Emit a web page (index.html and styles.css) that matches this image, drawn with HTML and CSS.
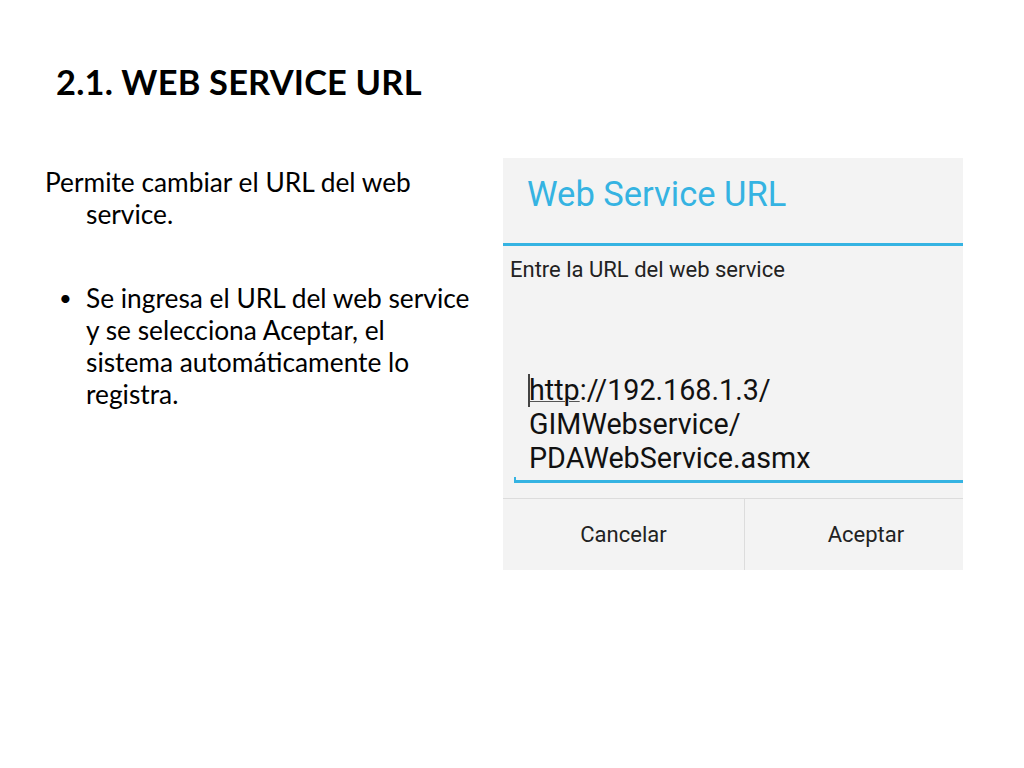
FILE: index.html
```html
<!DOCTYPE html>
<html lang="es">
<head>
<meta charset="utf-8">
<title>2.1. Web Service URL</title>
<link rel="stylesheet" href="styles.css">
</head>
<body>
<div class="slide">
  <h1 class="title">2.1. WEB SERVICE URL</h1>
  <div class="content">
    <div class="text">
      <p class="para">Permite cambiar el URL del web service.</p>
      <ul class="bullets">
        <li>Se ingresa el URL del web service y se selecciona Aceptar, el sistema automáticamente lo registra.</li>
      </ul>
    </div>
    <div class="dialog">
      <div class="dlg-head">Web Service URL</div>
      <div class="dlg-body">
        <div class="dlg-label">Entre la URL del web service</div>
        <div class="dlg-input">
          <div class="url"><span class="cursor"></span><span class="spell">http</span>://192.168.1.3/<br>GIMWebservice/<br>PDAWebService.asmx</div>
          <div class="underline"></div>
        </div>
      </div>
      <div class="dlg-buttons">
        <div class="btn">Cancelar</div>
        <div class="btn">Aceptar</div>
      </div>
    </div>
  </div>
</div>
</body>
</html>
```

FILE: styles.css
```css
html, body {
  margin: 0;
  padding: 0;
  background: #ffffff;
}
.slide {
  width: 1024px;
  height: 768px;
  font-family: "Lato", "Open Sans", sans-serif;
  color: #000;
}
.title {
  margin: 0;
  padding: 62px 0 0 56px;
  font-size: 34.4px;
  font-weight: 700;
  line-height: 40px;
  letter-spacing: 0.2px;
}
.content {
  display: flex;
  align-items: flex-start;
  padding: 56px 0 0 45px;
}
.text {
  width: 425px;
  padding-top: 8px;
  font-size: 26.3px;
  line-height: 32px;
}
.para {
  margin: 0;
  padding-left: 41px;
  text-indent: -41px;
}
.bullets {
  margin: 52px 0 0 0;
  padding: 0 0 0 41px;
  list-style: none;
}
.bullets li {
  position: relative;
}
.bullets li::before {
  content: "•";
  position: absolute;
  left: -27px;
  top: 0;
  font-size: 22px;
}
.dialog {
  margin-left: 33px;
  width: 460px;
  height: 412px;
  background: #f3f3f3;
  font-family: "Roboto", sans-serif;
  display: flex;
  flex-direction: column;
}
.dlg-head {
  height: 89px;
  box-sizing: border-box;
  padding: 16px 0 0 24px;
  color: #35b3e2;
  font-size: 34.5px;
  line-height: 40px;
  border-bottom: 3px solid #35b3e2;
}
.dlg-body {
  flex: 1;
  display: flex;
  flex-direction: column;
}
.dlg-label {
  padding: 10px 0 0 7px;
  font-size: 22px;
  line-height: 28px;
  color: #222;
}
.dlg-input {
  margin-top: 89px;
  margin-left: 11px;
}
.url {
  position: relative;
  padding-left: 15px;
  font-size: 28.7px;
  line-height: 34px;
  color: #111;
}
.spell {
  text-decoration: underline;
  text-decoration-color: #555;
  text-decoration-thickness: 1px;
}
.cursor {
  position: absolute;
  left: 14px;
  top: 1px;
  width: 2px;
  height: 33px;
  background: #444;
}
.underline {
  margin-top: 2px;
  height: 6px;
  border-left: 2px solid #35b3e2;
  border-bottom: 3px solid #35b3e2;
  box-sizing: border-box;
}
.dlg-buttons {
  margin-top: 15px;
  height: 72px;
  display: flex;
  border-top: 1px solid #dcdcdc;
}
.btn {
  flex: 1;
  display: flex;
  align-items: center;
  justify-content: center;
  font-size: 22px;
  color: #222;
}
.btn:first-child {
  flex: 0 0 241px;
  border-right: 1px solid #dcdcdc;
}
.btn:last-child {
  padding-left: 24px;
}
```
